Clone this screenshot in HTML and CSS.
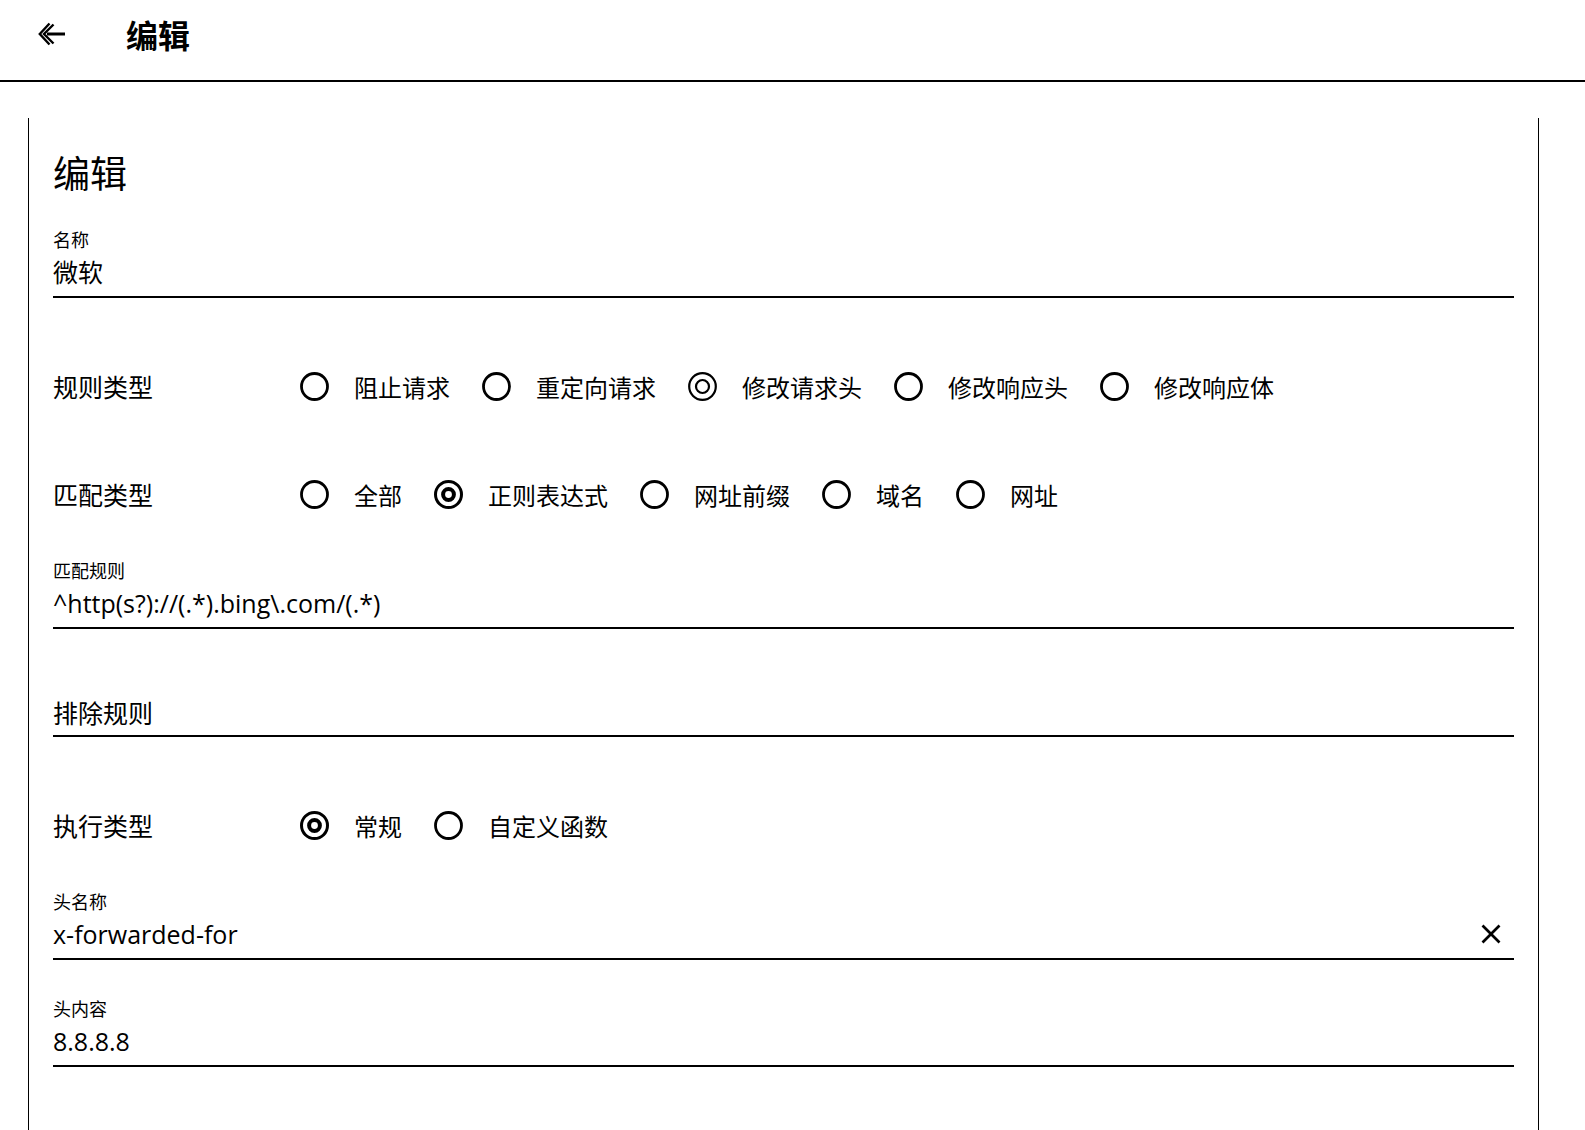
FILE: index.html
```html
<!DOCTYPE html>
<html lang="zh-CN">
<head>
<meta charset="utf-8">
<title>编辑</title>
<link rel="stylesheet" href="styles.css">
</head>
<body>
<header class="topbar">
  <svg class="back-icon" width="28" height="24" viewBox="0 0 28 24" aria-hidden="true">
    <polyline points="11.5,1.5 1.8,12 11.5,22.5" fill="none" stroke="#000" stroke-width="2.4"/>
    <polyline points="15.5,2.5 6,12 15.5,21.5" fill="none" stroke="#000" stroke-width="2.4"/>
    <line x1="9" y1="12" x2="27" y2="12" stroke="#000" stroke-width="3"/>
  </svg>
  <h1 class="page-title">编辑</h1>
</header>

<main class="card">
  <h2 class="card-title">编辑</h2>

  <div class="field field-name">
    <div class="field-label">名称</div>
    <div class="field-value">微软</div>
  </div>

  <div class="radio-row">
    <div class="row-label">规则类型</div>
    <div class="radio"><svg class="radio-icon" viewBox="0 0 29 29"><circle cx="14.5" cy="14.5" r="13" fill="none" stroke="#000" stroke-width="2.8"/></svg><span>阻止请求</span></div>
    <div class="radio"><svg class="radio-icon" viewBox="0 0 29 29"><circle cx="14.5" cy="14.5" r="13" fill="none" stroke="#000" stroke-width="2.8"/></svg><span>重定向请求</span></div>
    <div class="radio"><svg class="radio-icon" viewBox="0 0 29 29"><circle cx="14.5" cy="14.5" r="13.3" fill="none" stroke="#000" stroke-width="2.2"/><circle cx="14.5" cy="14.5" r="6.5" fill="none" stroke="#000" stroke-width="2.2"/></svg><span>修改请求头</span></div>
    <div class="radio"><svg class="radio-icon" viewBox="0 0 29 29"><circle cx="14.5" cy="14.5" r="13" fill="none" stroke="#000" stroke-width="2.8"/></svg><span>修改响应头</span></div>
    <div class="radio"><svg class="radio-icon" viewBox="0 0 29 29"><circle cx="14.5" cy="14.5" r="13" fill="none" stroke="#000" stroke-width="2.8"/></svg><span>修改响应体</span></div>
  </div>

  <div class="radio-row radio-row-next">
    <div class="row-label">匹配类型</div>
    <div class="radio"><svg class="radio-icon" viewBox="0 0 29 29"><circle cx="14.5" cy="14.5" r="13" fill="none" stroke="#000" stroke-width="2.8"/></svg><span>全部</span></div>
    <div class="radio"><svg class="radio-icon" viewBox="0 0 29 29"><circle cx="14.5" cy="14.5" r="13" fill="none" stroke="#000" stroke-width="3"/><circle cx="14.5" cy="14.5" r="5.4" fill="#fff" stroke="#000" stroke-width="4"/></svg><span>正则表达式</span></div>
    <div class="radio"><svg class="radio-icon" viewBox="0 0 29 29"><circle cx="14.5" cy="14.5" r="13" fill="none" stroke="#000" stroke-width="2.8"/></svg><span>网址前缀</span></div>
    <div class="radio"><svg class="radio-icon" viewBox="0 0 29 29"><circle cx="14.5" cy="14.5" r="13" fill="none" stroke="#000" stroke-width="2.8"/></svg><span>域名</span></div>
    <div class="radio"><svg class="radio-icon" viewBox="0 0 29 29"><circle cx="14.5" cy="14.5" r="13" fill="none" stroke="#000" stroke-width="2.8"/></svg><span>网址</span></div>
  </div>

  <div class="field field-after-row">
    <div class="field-label">匹配规则</div>
    <div class="field-value">^http(s?)://(.*).bing\.com/(.*)</div>
  </div>

  <div class="field field-exclude">
    <div class="field-label"></div>
    <div class="field-value">排除规则</div>
  </div>

  <div class="radio-row radio-row-exec">
    <div class="row-label">执行类型</div>
    <div class="radio"><svg class="radio-icon" viewBox="0 0 29 29"><circle cx="14.5" cy="14.5" r="13" fill="none" stroke="#000" stroke-width="3"/><circle cx="14.5" cy="14.5" r="5.4" fill="#fff" stroke="#000" stroke-width="4"/></svg><span>常规</span></div>
    <div class="radio"><svg class="radio-icon" viewBox="0 0 29 29"><circle cx="14.5" cy="14.5" r="13" fill="none" stroke="#000" stroke-width="2.8"/></svg><span>自定义函数</span></div>
  </div>

  <div class="field field-after-exec">
    <div class="field-label">头名称</div>
    <div class="field-value">
      <span>x-forwarded-for</span>
      <svg class="clear-icon" width="20" height="20" viewBox="0 0 20 20" aria-hidden="true">
        <line x1="1.5" y1="1.5" x2="18.5" y2="18.5" stroke="#000" stroke-width="2.6"/>
        <line x1="18.5" y1="1.5" x2="1.5" y2="18.5" stroke="#000" stroke-width="2.6"/>
      </svg>
    </div>
  </div>

  <div class="field field-content">
    <div class="field-label">头内容</div>
    <div class="field-value">8.8.8.8</div>
  </div>
</main>
</body>
</html>
```

FILE: styles.css
```css
html, body {
  margin: 0;
  padding: 0;
  background: #fff;
  overflow: hidden;
}

body {
  font-family: "Open Sans", "Noto Sans CJK SC", sans-serif;
  color: #000;
}

.topbar {
  height: 66px;
  border-bottom: 2px solid #000;
  display: flex;
  align-items: flex-start;
  padding-left: 38px;
  padding-top: 14px;
}

.back-icon {
  margin-top: 8px;
  flex: none;
}

.page-title {
  margin: 0 0 0 60px;
  font-family: "Noto Sans CJK SC", sans-serif;
  font-size: 32px;
  font-weight: 700;
  line-height: 40px;
}

.card {
  margin: 36px 46px 0 28px;
  border-left: 1px solid #000;
  border-right: 1px solid #000;
  padding: 24px 24px 0;
  min-height: 1012px;
  box-sizing: border-box;
}

.card-title {
  margin: 0;
  font-family: "Noto Sans CJK SC", sans-serif;
  font-size: 37px;
  font-weight: 400;
  line-height: 60px;
}

.field {
  border-bottom: 2px solid #000;
}

.field-label {
  font-family: "Noto Sans CJK SC", sans-serif;
  font-size: 18px;
  line-height: 24px;
  height: 24px;
}

.field-value {
  font-size: 25px;
  line-height: 36px;
  height: 36px;
  margin-top: 3px;
  padding-bottom: 6px;
  display: flex;
  align-items: center;
  justify-content: space-between;
}

.field-name {
  margin-top: 25px;
}

.field-after-row {
  margin-top: 10px;
}

.field-exclude {
  margin-top: 39px;
}

.field-exclude .field-value {
  padding-bottom: 4px;
}

.field-after-exec {
  margin-top: 10px;
}

.field-content {
  margin-top: 36px;
}

.clear-icon {
  margin-right: 13px;
  flex: none;
}

.radio-row {
  display: flex;
  align-items: center;
  height: 108px;
  margin-top: 34px;
}

.radio-row-next {
  margin-top: 0;
}

.radio-row-exec {
  margin-top: 34px;
}

.row-label {
  width: 247px;
  flex: none;
  font-family: "Noto Sans CJK SC", sans-serif;
  font-size: 25px;
}

.radio {
  display: flex;
  align-items: center;
  gap: 25px;
  margin-right: 32px;
  font-family: "Noto Sans CJK SC", sans-serif;
  font-size: 24px;
}

.radio-icon {
  width: 29px;
  height: 29px;
  flex: none;
}
```
